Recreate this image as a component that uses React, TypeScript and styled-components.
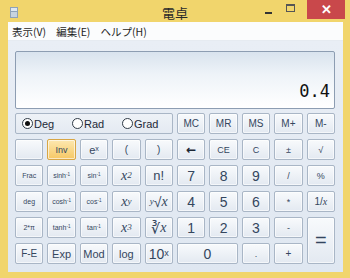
import styled, { createGlobalStyle } from 'styled-components'

const GlobalStyle = createGlobalStyle`
  body {
    margin: 0;
    overflow: hidden;
  }
`

const Window = styled.div`
  width: 350px;
  height: 278px;
  box-sizing: border-box;
  background: #f1d56c;
  display: flex;
  flex-direction: column;
  font-family: 'Liberation Sans', 'Noto Sans CJK JP', sans-serif;
  color: #1f1f1f;
`

const TitleBar = styled.div`
  height: 22px;
  display: grid;
  grid-template-columns: 1fr auto 1fr;
  align-items: start;
`

const AppIcon = styled.svg`
  margin: 7px 0 0 10px;
`

const Title = styled.div`
  font-family: 'Noto Sans CJK JP', sans-serif;
  font-size: 13px;
  line-height: 18px;
  padding-top: 4px;
  color: #2a2a2a;
`

const Controls = styled.div`
  display: flex;
  justify-content: flex-end;
  align-items: flex-start;
  margin-right: 5px;
`

const CtrlButton = styled.div<{ $close?: boolean }>`
  width: ${(p) => (p.$close ? '38px' : '22px')};
  height: 19px;
  display: flex;
  align-items: center;
  justify-content: center;
  background: ${(p) => (p.$close ? '#c9484b' : 'transparent')};
  color: #fff;
  font-size: 13px;
  font-weight: bold;
  margin-left: ${(p) => (p.$close ? '6px' : '0')};
`

const MinBar = styled.div`
  width: 7px;
  height: 2px;
  background: #333;
  margin-top: 6px;
`

const MaxBox = styled.div`
  width: 7px;
  height: 5px;
  border: 1px solid #555;
  border-top-width: 2px;
  margin-top: -4px;
`

const Frame = styled.div`
  flex: 1;
  margin: 0 7px 6px 8px;
  display: flex;
  flex-direction: column;
`

const MenuBar = styled.div`
  height: 18px;
  background: #fbfcfd;
  display: flex;
  align-items: center;
  padding-left: 4px;
  font-family: 'Noto Sans CJK JP', sans-serif;
  font-size: 10.5px;
  border-bottom: 1px solid #e6ebf1;
`

const MenuItem = styled.span`
  margin-right: 10px;
`

const Panel = styled.div`
  flex: 1;
  background: linear-gradient(#e9eef5, #dfe7f1);
  padding: 10px 8px 0 7px;
`

const Display = styled.div`
  height: 49px;
  border: 1px solid #8d9db2;
  border-radius: 2px;
  background: linear-gradient(to bottom, #d9e3ee 0%, #eef3f8 40%, #ffffff 100%);
  display: flex;
  align-items: flex-end;
  justify-content: flex-end;
  padding: 0 4px 7px 0;
  font-family: 'DejaVu Sans Mono', monospace;
  font-size: 17px;
  color: #111;
  margin-bottom: 4px;
`

const Keys = styled.div`
  display: grid;
  grid-template-columns: repeat(10, 1fr);
  grid-auto-rows: 21px;
  column-gap: 4px;
  row-gap: 5px;
`

const RadioGroup = styled.div`
  grid-column: span 5;
  border: 1px solid #a9b6c6;
  border-radius: 2px;
  background: linear-gradient(#eef2f7, #e4eaf2);
  display: flex;
  align-items: center;
  padding-left: 6px;
`

const RadioItem = styled.label`
  width: 55px;
  display: flex;
  align-items: center;
  gap: 1px;
  font-size: 11px;
  color: #1e2a38;
`

const RadioDot = styled.span<{ $on?: boolean }>`
  width: 9px;
  height: 9px;
  border-radius: 50%;
  border: 1px solid #2f3a46;
  background: #fff;
  display: flex;
  align-items: center;
  justify-content: center;

  &::after {
    content: '';
    width: 5px;
    height: 5px;
    border-radius: 50%;
    background: ${(p) => (p.$on ? '#111' : 'transparent')};
  }
`

const Key = styled.div<{ $size?: number; $serif?: boolean; $accent?: boolean; $cols?: number; $rows?: number }>`
  grid-column: span ${(p) => p.$cols || 1};
  grid-row: span ${(p) => p.$rows || 1};
  box-sizing: border-box;
  border: 1px solid ${(p) => (p.$accent ? '#d8a645' : '#a9b6c6')};
  border-radius: 2px;
  background: ${(p) =>
    p.$accent
      ? 'linear-gradient(#fde8b0, #f6c865)'
      : 'linear-gradient(#f8fafc, #e3e9f1)'};
  box-shadow: inset 0 0 0 1px rgba(255, 255, 255, 0.6);
  display: flex;
  align-items: center;
  justify-content: center;
  color: #34465e;
  font-size: ${(p) => p.$size || 9}px;
  font-family: ${(p) => (p.$serif ? "'Liberation Serif', serif" : "'Liberation Sans', sans-serif")};
  font-style: ${(p) => (p.$serif ? 'italic' : 'normal')};
  white-space: nowrap;

  sup {
    font-size: 0.65em;
    line-height: 0;
    position: relative;
    top: -0.1em;
  }
`

const Upright = styled.span`
  font-style: normal;
  font-family: 'Liberation Sans', sans-serif;
`

const Italic = styled.i`
  font-family: 'Liberation Serif', serif;
`

const Arrow = styled.span`
  font-family: 'DejaVu Sans', sans-serif;
  font-weight: bold;
  color: #1c2634;
`

const App = () => {
  return (
    <>
      <GlobalStyle />
      <Window>
        <TitleBar>
          <AppIcon width="8" height="11" viewBox="0 0 8 11">
            <rect x="0" y="0" width="8" height="11" fill="#8ea2b8" />
            <rect x="1" y="1" width="6" height="3" fill="#dfe8f1" />
            <rect x="1" y="5" width="6" height="5" fill="#c7d3df" />
          </AppIcon>
          <Title>電卓</Title>
          <Controls>
            <CtrlButton>
              <MinBar />
            </CtrlButton>
            <CtrlButton>
              <MaxBox />
            </CtrlButton>
            <CtrlButton $close>✕</CtrlButton>
          </Controls>
        </TitleBar>
        <Frame>
          <MenuBar>
            <MenuItem>表示(V)</MenuItem>
            <MenuItem>編集(E)</MenuItem>
            <MenuItem>ヘルプ(H)</MenuItem>
          </MenuBar>
          <Panel>
            <Display>0.4</Display>
            <Keys>
              <RadioGroup>
                <RadioItem>
                  <RadioDot $on />
                  Deg
                </RadioItem>
                <RadioItem>
                  <RadioDot />
                  Rad
                </RadioItem>
                <RadioItem>
                  <RadioDot />
                  Grad
                </RadioItem>
              </RadioGroup>
              <Key $size={10}>MC</Key>
              <Key $size={10}>MR</Key>
              <Key $size={10}>MS</Key>
              <Key $size={10}>M+</Key>
              <Key $size={10}>M-</Key>

              <Key />
              <Key $accent $size={9}>Inv</Key>
              <Key $size={11}>
                e<sup>x</sup>
              </Key>
              <Key $size={10}>(</Key>
              <Key $size={10}>)</Key>
              <Key $size={12}>
                <Arrow>←</Arrow>
              </Key>
              <Key $size={9}>CE</Key>
              <Key $size={9}>C</Key>
              <Key $size={9}>±</Key>
              <Key $size={9}>√</Key>

              <Key $size={7}>Frac</Key>
              <Key $size={7}>
                sinh<sup>-1</sup>
              </Key>
              <Key $size={7}>
                sin<sup>-1</sup>
              </Key>
              <Key $serif $size={14}>
                x<sup>2</sup>
              </Key>
              <Key $size={13}>n!</Key>
              <Key $size={14}>7</Key>
              <Key $size={14}>8</Key>
              <Key $size={14}>9</Key>
              <Key $size={9}>/</Key>
              <Key $size={9}>%</Key>

              <Key $size={7}>deg</Key>
              <Key $size={7}>
                cosh<sup>-1</sup>
              </Key>
              <Key $size={7}>
                cos<sup>-1</sup>
              </Key>
              <Key $serif $size={14}>
                x<sup>y</sup>
              </Key>
              <Key $serif $size={14}>
                <sup>y</sup>
                <Upright>√</Upright>x
              </Key>
              <Key $size={14}>4</Key>
              <Key $size={14}>5</Key>
              <Key $size={14}>6</Key>
              <Key $size={9}>*</Key>
              <Key $size={10}>
                1/<Italic>x</Italic>
              </Key>

              <Key $size={7}>2*π</Key>
              <Key $size={7}>
                tanh<sup>-1</sup>
              </Key>
              <Key $size={7}>
                tan<sup>-1</sup>
              </Key>
              <Key $serif $size={14}>
                x<sup>3</sup>
              </Key>
              <Key $serif $size={14}>
                <Upright>∛</Upright>x
              </Key>
              <Key $size={14}>1</Key>
              <Key $size={14}>2</Key>
              <Key $size={14}>3</Key>
              <Key $size={9}>-</Key>
              <Key $rows={2} $size={20}>
                =
              </Key>

              <Key $size={10}>F-E</Key>
              <Key $size={11}>Exp</Key>
              <Key $size={11}>Mod</Key>
              <Key $size={11}>log</Key>
              <Key $size={14}>
                10<sup>x</sup>
              </Key>
              <Key $cols={2} $size={14}>
                0
              </Key>
              <Key $size={9}>.</Key>
              <Key $size={10}>+</Key>
            </Keys>
          </Panel>
        </Frame>
      </Window>
    </>
  )
}

export default App
